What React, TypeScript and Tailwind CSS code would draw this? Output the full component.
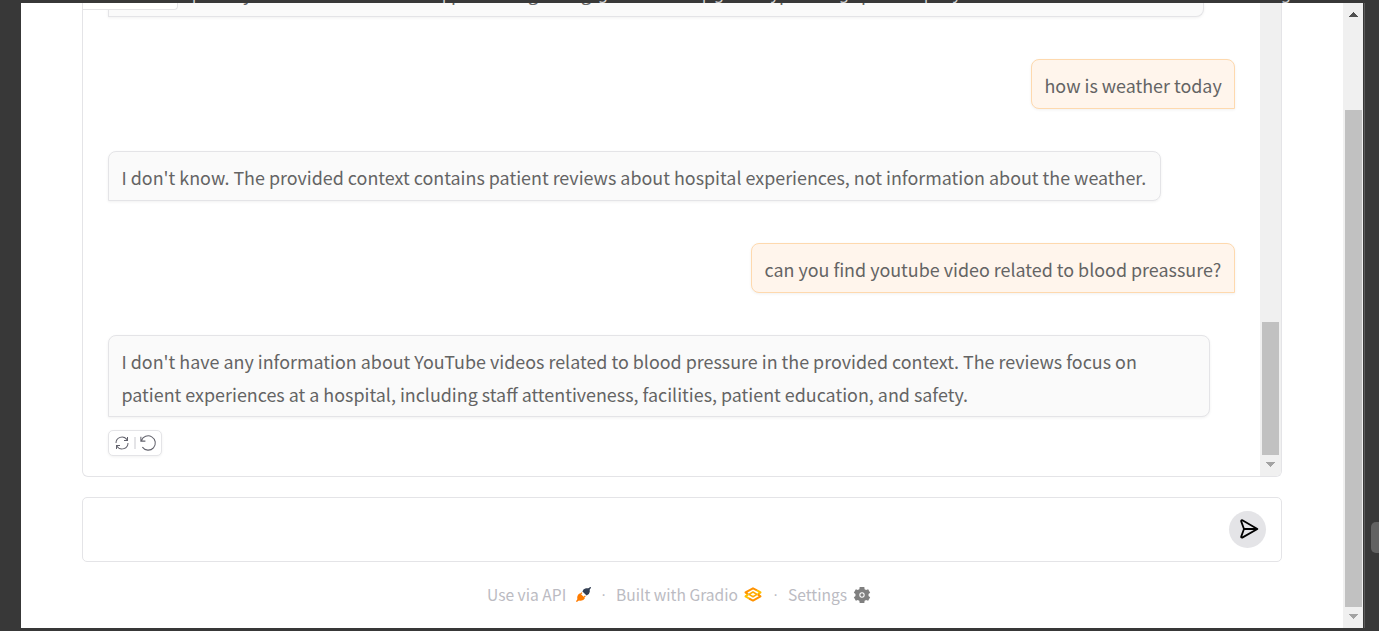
import React from "react";

type Mark = { left: number; char: string };

const headerMarks: Mark[] = [
  { left: 192, char: "p" }, { left: 442, char: "p" }, { left: 598, char: "g" }, { left: 702, char: "p" },
  { left: 714, char: "g" }, { left: 771, char: "y" }, { left: 839, char: "g" }, { left: 924, char: "p" },
  { left: 953, char: "y" }, { left: 1281, char: "g" },
];
const messageMarks: Mark[] = [
  { left: 134, char: "y" }, { left: 342, char: "p" }, { left: 419, char: "g" }, { left: 472, char: "g" },
  { left: 670, char: "p" }, { left: 752, char: "p" },
];

function Triangle({ up = false, color }: { up?: boolean; color: string }) {
  return (
    <svg width="9" height="5" viewBox="0 0 9 5" className="block" shapeRendering="crispEdges">
      <path d={up ? "M4.5 0L9 5H0Z" : "M0 0H9L4.5 5Z"} fill={color} />
    </svg>
  );
}

function User({ className, children }: { className: string; children: React.ReactNode }) {
  return (
    <div className={"flex h-[50px] shrink-0 self-end rounded-[8px] rounded-br-none border border-[#fed9ae] bg-[#fff5ec] pl-[12.5px] pt-[9px] shadow-[0_1px_3px_rgba(0,0,0,0.06)] " + className}>
      <span className="whitespace-nowrap">{children}</span>
    </div>
  );
}

function Bot({ className, children }: { className: string; children: React.ReactNode }) {
  return (
    <div className={"shrink-0 self-start whitespace-nowrap rounded-[8px] rounded-bl-none border border-[#e4e4e7] bg-[#fafafa] pl-[12.5px] pt-[9px] shadow-[0_1px_3px_rgba(0,0,0,0.06)] " + className}>
      {children}
    </div>
  );
}

export default function App() {
  return (
    <div className="relative flex h-[631px] w-[1379px] flex-col overflow-hidden bg-[#383838] font-['Noto_Sans_CJK_SC','Open_Sans',sans-serif] text-[#646464]">
      <div className="relative h-[3px] shrink-0 overflow-hidden">
        {headerMarks.map((m) => (
          <span key={m.left} className="absolute -top-[19px] font-['Noto_Sans',sans-serif] text-[16px] leading-[24px] text-[#d4d4d4]" style={{ left: m.left }}>{m.char}</span>
        ))}
      </div>
      <div className="flex h-[625px] shrink-0">
        <div className="w-[21px] shrink-0" />
        <div className="flex w-[1342px] shrink-0 bg-white">
          <main className="flex w-[1322px] flex-col pl-[61px]">
            <section className="relative flex h-[474px] w-[1200px] shrink-0 overflow-hidden rounded-b-[6px] border border-t-0 border-[#e4e4e7]">
              <div className="absolute left-0 top-0 z-10 h-[7px] w-[95px] rounded-br-[4px] border-b border-r border-[#e4e4e7] bg-white" />
              <div className="flex w-[1177px] flex-col pl-[25px] pr-[25px] text-[17.9px] leading-[33px]">
                <div className="relative h-[14px] w-[1096px] shrink-0 overflow-hidden rounded-br-[8px] border border-t-0 border-[#e4e4e7] bg-[#fafafa] shadow-[0_1px_3px_rgba(0,0,0,0.06)]">
                  {messageMarks.map((m) => (
                    <span key={m.left} className="absolute -top-[26px]" style={{ left: m.left }}>{m.char}</span>
                  ))}
                </div>
                <div className="mt-[42px] flex flex-col gap-[42px]">
                  <User className="w-[204px]">how is weather today</User>
                  <Bot className="h-[50px] w-[1053px]">
                    <p>I don't know. The provided context contains patient reviews about hospital experiences, not information about the weather.</p>
                  </Bot>
                  <User className="w-[484px]">can you find youtube video related to blood preassure?</User>
                  <Bot className="h-[82px] w-[1102px]">
                    <p>I don't have any information about YouTube videos related to blood pressure in the provided context. The reviews focus on</p>
                    <p>patient experiences at a hospital, including staff attentiveness, facilities, patient education, and safety.</p>
                  </Bot>
                </div>
                <div className="mt-[13px] flex h-[26px] w-[54px] shrink-0 items-center rounded-[5px] border border-[#e4e4e7] bg-white pl-[5px] text-[#62626c] shadow-[0_1px_3px_rgba(0,0,0,0.06)]">
                  <svg width="16" height="16" viewBox="0 0 32 32" fill="currentColor">
                    <path d="M12 10H6.78A11 11 0 0 1 27 16h2A13 13 0 0 0 6 7.68V4H4v8h8zm8 12h5.22A11 11 0 0 1 5 16H3a13 13 0 0 0 23 8.32V28h2v-8h-8z" transform="translate(32 0) scale(-1 1)" />
                  </svg>
                  <div className="ml-[4px] h-[12px] w-[2px] bg-[#e4e4e7]" />
                  <svg className="ml-[3px]" width="18" height="18" viewBox="0 0 24 24" fill="none" stroke="currentColor" strokeWidth="1.4">
                    <path d="M2.5 3.5V9.5H8.5M3.2 9.1A9.5 9.5 0 1 1 4.5 17.5" />
                  </svg>
                </div>
              </div>
              <div className="flex w-[21px] flex-col items-center bg-[#f0f0f0]">
                <div className="mt-[319px] h-[133px] w-[17px] bg-[#c1c1c1]" />
                <div className="mt-[7px]"><Triangle color="#a3a3a3" /></div>
              </div>
            </section>
            <section className="mt-[20px] flex h-[65px] w-[1200px] shrink-0 items-center justify-end rounded-[5px] border border-[#e4e4e7] bg-white pr-[15px]">
              <button aria-label="Send" className="flex h-[37px] w-[37px] items-center justify-center rounded-full bg-[#e4e4e7] text-black">
                <svg className="-mt-px ml-[3px]" width="19" height="20" viewBox="0 0 19 20" fill="none" stroke="currentColor" strokeWidth="1.8" strokeLinejoin="round" strokeLinecap="round">
                  <path d="M4 10H17M2 1.2Q1 1.2 1.2 2.4L4 10L1.2 17.6Q1 18.8 2.2 18.6L17.4 10L2.4 1.3Z" />
                </svg>
              </button>
            </section>
            <footer className="mt-[19px] flex h-[27px] w-[1200px] shrink-0 items-center pl-[405px] text-[15.6px] leading-[27px] text-[#bbbbc2]">
              <span className="w-[80px] whitespace-nowrap">Use via API</span>
              <svg className="ml-[9px]" width="15" height="15" viewBox="0 0 15 15">
                <path d="M0.4 14.6L3 12" stroke="#ff7c00" strokeWidth="1.4" />
                <path d="M4 6.2L9 11Q7.6 13.8 4.8 13.8L1.4 13.5L1.2 10Q1.4 7.2 4 6.2Z" fill="#ff7c00" />
                <path d="M4.6 7L6 5.6M8 10.2L9.4 8.8" stroke="#ff7c00" strokeWidth="1.2" />
                <path d="M6.4 4.4Q7.2 1.6 10 1.2L13.6 1.3L13.8 4.8Q13.3 7.8 10.6 8.5Z" fill="#344054" />
                <path d="M12.5 2.5L14.7 0.3" stroke="#344054" strokeWidth="1.4" />
              </svg>
              <span className="ml-[5px] w-[20px] pl-[5px] font-['Liberation_Sans',sans-serif]">·</span>
              <span className="w-[124px] whitespace-nowrap">Built with Gradio</span>
              <svg className="ml-[4px]" width="18" height="15" viewBox="0 0 18 15" fill="none" strokeWidth="2" strokeLinejoin="round">
                <path d="M4.2 7.4L1.5 5.4L9 1.3L13 3.4" stroke="#ff9200" />
                <path d="M13 3.4L16.5 5.4L13.8 7.4" stroke="#ffc000" />
                <path d="M4.2 7.4L1.5 9.4L5 11.5" stroke="#ffc000" />
                <path d="M5 11.5L9 13.6L16.5 9.4L13.8 7.4" stroke="#ff9200" />
                <path d="M5 7.4L9 5L13 7.4L9 9.8Z" stroke="#ffab00" strokeWidth="1.6" />
              </svg>
              <span className="ml-[6px] w-[20px] pl-[5px] font-['Liberation_Sans',sans-serif]">·</span>
              <span className="w-[62px] whitespace-nowrap">Settings</span>
              <svg className="ml-[2px]" width="20" height="20" viewBox="0 0 24 24" fill="#808080">
                <path fillRule="evenodd" d="M19.8 13.2a7 7 0 0 0 0-2.4l2-1.6-2.4-4.2-2.6 1a8 8 0 0 0-1.7-1L14.8 2.4H9.2L8.8 5a8 8 0 0 0-1.7 1L4.6 5 2.2 9.2l2 1.6a7 7 0 0 0 0 2.4l-2 1.6L4.6 19l2.5-1a8 8 0 0 0 1.7 1l.4 2.6h5.6l.3-2.6a8 8 0 0 0 1.7-1l2.6 1 2.4-4.2ZM12 15.2a3.2 3.2 0 1 1 0-6.4 3.2 3.2 0 0 1 0 6.4ZM12 14a2 2 0 1 0 0-4 2 2 0 0 0 0 4Z" />
              </svg>
            </footer>
          </main>
          <div className="flex w-[20px] flex-col items-center bg-[#f0f0f0]">
            <div className="mt-[9px]"><Triangle up color="#505050" /></div>
            <div className="mt-[93px] h-[497px] w-[17px] bg-[#c1c1c1]" />
            <div className="mt-[7px]"><Triangle color="#a3a3a3" /></div>
          </div>
        </div>
        <div className="flex w-[16px] items-start justify-end border-l border-[#383838]">
          <div className="h-full w-px bg-[#5b5b5b]" />
          <div className="ml-[6px] mt-[519px] h-[31px] w-[8px] shrink-0 rounded-l-[5px] bg-[#626262]" />
        </div>
      </div>
    </div>
  );
}
